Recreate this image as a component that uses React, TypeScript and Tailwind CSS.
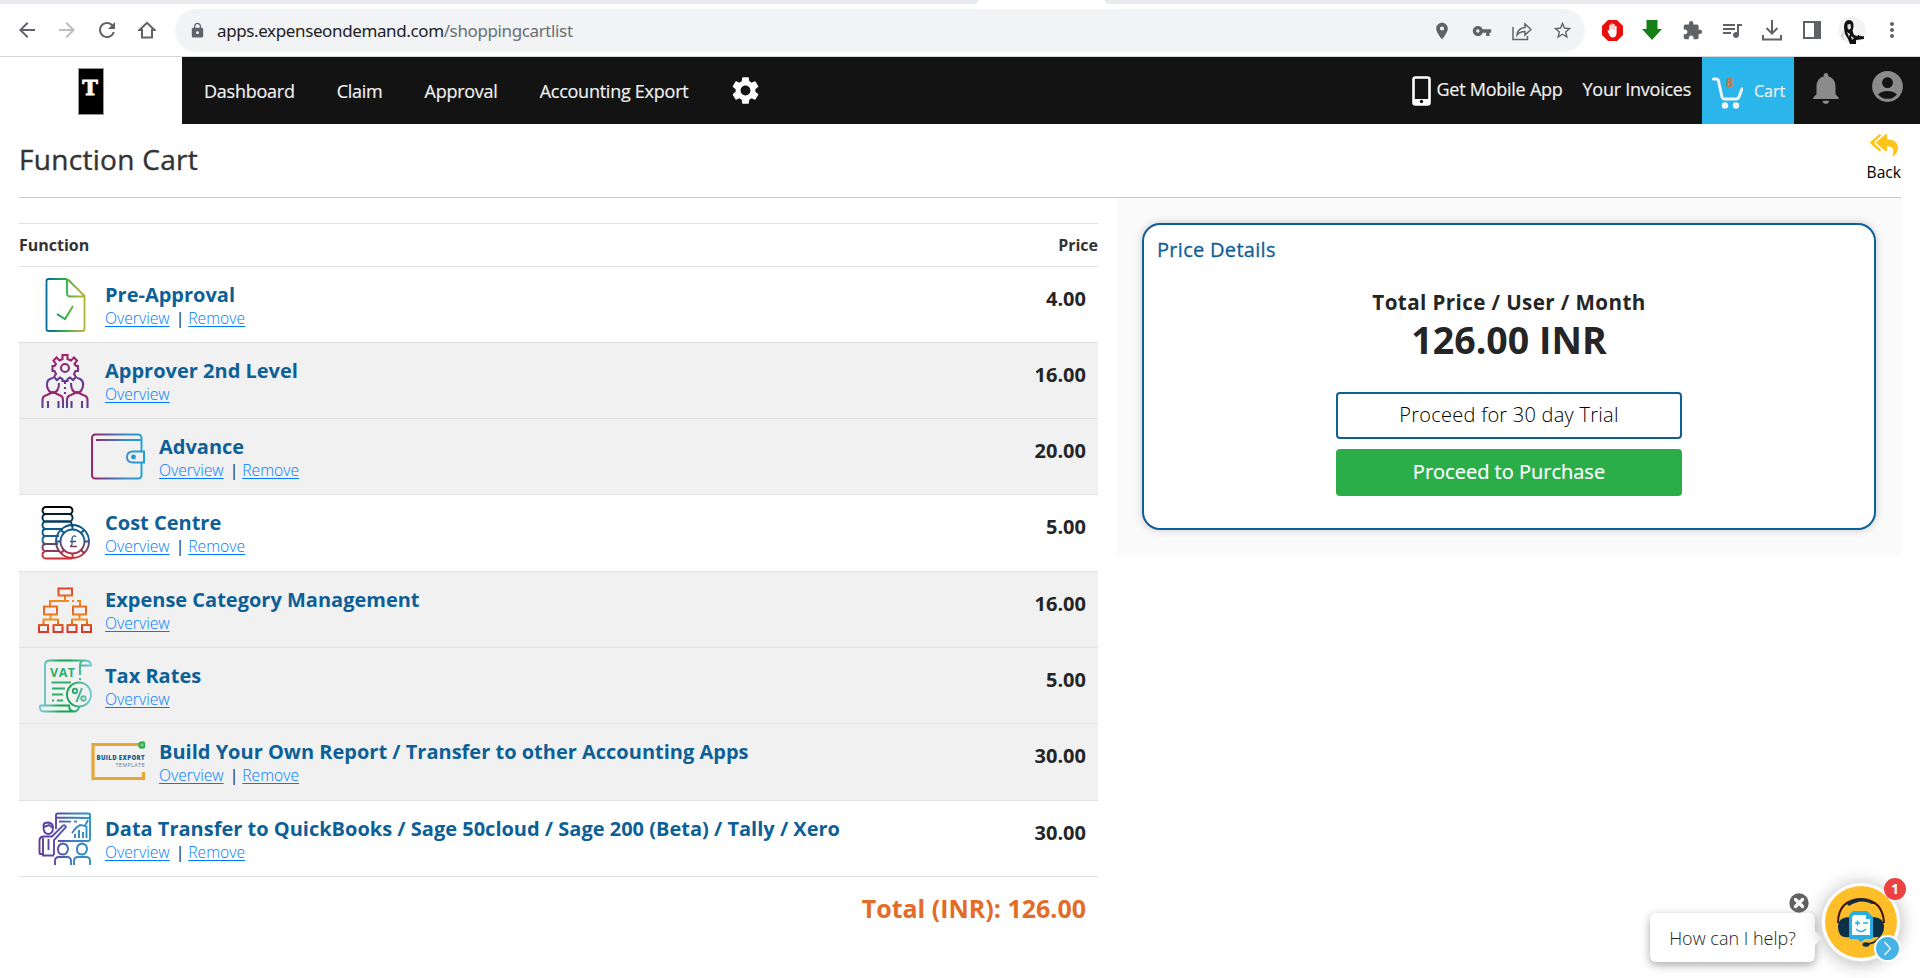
import React from "react";
import { MdLock, MdLocationOn, MdVpnKey, MdStarBorder, MdExtension, MdMoreVert, MdAccountCircle, MdSettings, MdArrowBack, MdArrowForward, MdRefresh, MdOutlineQueueMusic, MdNotifications } from "react-icons/md";
import { FaReplyAll } from "react-icons/fa";

type IconName = "doc" | "approver" | "wallet" | "coins" | "tree" | "vat" | "export" | "board";

type Item = {
  name: string;
  price: string;
  icon: IconName;
  shaded?: boolean;
  child?: boolean;
  removable?: boolean;
};

const items: Item[] = [
  { name: "Pre-Approval", price: "4.00", icon: "doc", removable: true },
  { name: "Approver 2nd Level", price: "16.00", icon: "approver", shaded: true },
  { name: "Advance", price: "20.00", icon: "wallet", shaded: true, child: true, removable: true },
  { name: "Cost Centre", price: "5.00", icon: "coins", removable: true },
  { name: "Expense Category Management", price: "16.00", icon: "tree", shaded: true },
  { name: "Tax Rates", price: "5.00", icon: "vat", shaded: true },
  { name: "Build Your Own Report / Transfer to other Accounting Apps", price: "30.00", icon: "export", shaded: true, child: true, removable: true },
  { name: "Data Transfer to QuickBooks / Sage 50cloud / Sage 200 (Beta) / Tally / Xero", price: "30.00", icon: "board", removable: true },
];

function Gradient({ id, stops, vertical }: { id: string; stops: string[]; vertical?: boolean }) {
  return (
    <linearGradient id={id} gradientUnits="userSpaceOnUse" x1="0" y1="0" x2={vertical ? 0 : 54} y2={vertical ? 54 : 0}>
      {stops.map((c, i) => (
        <stop key={c + i} offset={i / (stops.length - 1)} stopColor={c} />
      ))}
    </linearGradient>
  );
}

function ItemIcon({ name }: { name: IconName }) {
  const common = { width: 54, height: 54, viewBox: "0 0 54 54", fill: "none", strokeWidth: 1.9, className: "block shrink-0" };
  switch (name) {
    case "doc":
      return (
        <svg {...common} stroke="url(#g-doc)">
          <defs><Gradient id="g-doc" stops={["#0a6aa0", "#0a7a9a", "#2fae4a", "#a3b53a", "#b5b83a"]} /></defs>
          <path d="M29 1H10.500Q8.500 1 8.500 3V51Q8.500 53 10.500 53H44.500Q46.500 53 46.500 51V18L30 1.500M29 1V15Q29 18.500 32.500 18.500H46" />
          <path d="M19 36L27 41L35 28" strokeWidth="2" />
        </svg>
      );
    case "approver":
      return (
        <svg {...common} stroke="url(#g-app)" strokeWidth={2.1}>
          <defs><Gradient id="g-app" vertical stops={["#a81e66", "#8a2a78", "#5a3c98", "#a02268", "#4a4a9e"]} /></defs>
          <path d="M24.500 1H29.500V5L33 6.500L36 3.500L39 6.500L36.500 10L38 12H40V17H37.500L36 20L38 23L35 26L32 23.500L29.500 25V27H24.500V25L22 23.500L19 26L16 23L18 20L16.500 17H14.500V12H16.500L18 10L15.500 6.500L18.500 3.500L21.500 6.500L24.500 5Z" />
          <circle cx="27" cy="14" r="4" />
          <path d="M15 24Q8 25 9 32Q10 38 15 39Q21 38 21 29M39 24Q46 25 45 32Q44 38 39 39Q33 38 33 29" />
          <path d="M4.500 55V46Q4.500 42 9 41L15 38L21 41Q25 42 25 46V55M49.500 55V46Q49.500 42 45 41L39 38L33 41Q29 42 29 46V55M10 47V55M20.500 47V55M33.500 47V55M44 47V55" />
          <path d="M27 28V42" stroke="#7a2f86" strokeDasharray="2 3" />
        </svg>
      );
    case "wallet":
      return (
        <svg {...common} stroke="url(#g-wal)">
          <defs><Gradient id="g-wal" stops={["#a3195b", "#5a5a9e", "#3b8fc5", "#1aa3dc"]} /></defs>
          <path d="M50.500 21V8Q50.500 4.500 47 4.500H4.500Q1 4.500 1 8V45Q1 48.500 4.500 48.500H47Q50.500 48.500 50.500 45V32" />
          <path d="M5 10Q30 10.010 50 10" />
          <path d="M53 21.500H42Q36 21.500 36 27T42 32.500H53Z" strokeWidth="2" />
          <circle cx="42.500" cy="27" r="1.500" fill="#4a69a5" />
        </svg>
      );
    case "coins":
      return (
        <svg {...common} stroke="url(#g-coin)">
          <defs><Gradient id="g-coin" vertical stops={["#000000", "#04253c", "#0a5a8c", "#1a5f90", "#8a3a5a", "#e02a2e"]} /></defs>
          <rect x="4.500" y="1" width="30" height="7" rx="3.500" />
          <rect x="4.500" y="8" width="30" height="7.500" rx="3.500" />
          <path d="M34 21Q34 15.500 31 15.500H8Q4.500 15.500 4.500 19T8 23H25M21 30H8Q4.500 30 4.500 26.500T8 23M20 38H8Q4.500 38 4.500 34T8 30M22 45H8Q4.500 45 4.500 41.500T8 38M34 52.500H8Q4.500 52.500 4.500 49T8 45H22" />
          <circle cx="34.500" cy="35.500" r="16.500" />
          <circle cx="34.500" cy="35.500" r="12" />
          <path d="M34.500 19V23.500M34.500 47.500V52M18 35.500H22.500M46.500 35.500H51M23 24L26 27M43 27L46 24M23 47L26 44M43 44L46 47" />
          <path d="M38 31Q37 29.500 35.500 30Q34 30.500 34 33V38Q34 40 32 40.500H39M32 35.500H38" strokeWidth="1.300" />
        </svg>
      );
    case "tree":
      return (
        <svg {...common} stroke="url(#g-tree)" strokeWidth={2}>
          <defs><Gradient id="g-tree" vertical stops={["#d63a2a", "#e24a26", "#ef8f1c", "#ea5a22", "#ef9a1c", "#d63a2a", "#d63a2a"]} /></defs>
          <path d="M20.500 5.500H34V12.500H20.500ZM27 12.500V18H12V23.500M27 18H31M34 18H36M39 18H42V23.500M6 23.500H19V31.500H6ZM35 23.500H48V31.500H35ZM12.500 31.500V36.500M5.500 42V36.500H20V42M41.500 31.500V36.500M34 42V36.500H49V42M1 42H10V49H1ZM15.500 42H24.500V49H15.500ZM29.500 42H38.500V49H29.500ZM44 42H53V49H44Z" />
        </svg>
      );
    case "vat":
      return (
        <svg {...common} stroke="url(#g-vat)">
          <defs><Gradient id="g-vat" stops={["#7cc8e0", "#5abfae", "#12a650", "#12a650", "#4ab99a", "#7cc8e0"]} /></defs>
          <path d="M7 46V6Q7 1.500 12 1.500H47Q53 1.500 53 6.500H42Q42 1.500 47 1.500M42 6V16M42 19V21M2 46.500H31Q31 52.500 37 52.500H6Q1 52.500 2 46.500M37 52.500Q41 51 41 48" />
          <circle cx="41" cy="35.500" r="12" />
          <path d="M44 29L38.500 43" strokeWidth="2" />
          <circle cx="37" cy="32" r="2.200" />
          <circle cx="45.500" cy="39.500" r="2.200" />
          <path d="M13.500 23.500H33M14 29.500H27M14 35.500H25M14 41.500H16M19 41.500H25" stroke="#2fae6c" strokeWidth="2" />
          <text x="12" y="17.500" fontSize="12.500" fontWeight="700" textLength="25" stroke="none" fill="#2fae6c">VAT</text>
        </svg>
      );
    case "export":
      return (
        <svg {...common}>
          <path d="M48 9.500H2V43.500H52.500V37" stroke="#e8a735" strokeWidth="3.200" />
          <circle cx="51" cy="10" r="3.800" fill="#2aae4a" />
          <path d="M49 10H53M51 8V12" stroke="#8fd8a0" strokeWidth="1" />
          <text x="5.500" y="25" fontSize="6" fontWeight="800" textLength="48" fill="#0d5c8f">BUILD EXPORT</text>
          <text x="24.500" y="31.500" fontSize="5.600" textLength="29" fill="#5a7fa5">TEMPLATE</text>
        </svg>
      );
    case "board":
      return (
        <svg {...common} stroke="url(#g-board)">
          <defs><Gradient id="g-board" stops={["#5a3c98", "#5b4aa8", "#3b7fc0", "#2a95c5"]} /></defs>
          <path d="M18 17V3Q18 1.500 20 1.500H50Q52 1.500 52 3V27Q52 29 50 29H20M18 5.500L52 6M21 9.500L33 9.600M36 9.500L39 9.600" />
          <path d="M34 21L38 16L42 13L47 14L50 8M37 26V22M41 26V18M45 26V20M48.500 26V14" />
          <path d="M5.500 13Q6 10.500 10 10.500Q15 11 15 15.500Q15 22 10 22Q5 22 5.500 13ZM6 15L11 13L15 16" />
          <path d="M16 43.500H5V26M5 42H2Q1.500 42 1.500 39V28Q2 24.500 6 24.500H14L25 13.500Q27 12.500 28 15L16 28V43M10.500 27V38" />
          <path d="M25 31.500Q30 32 30 37.500Q29 42.500 25 42.500Q20 42.500 20 37.500Q20 32 25 31.500ZM44 31.500Q49 32 49 37.500Q48 42.500 44 42.500Q39 42.500 39 37.500Q39 32 44 31.500ZM17 53V49Q17 45 21 45H29Q33 45 33 49V53M36 53V49Q36 45 40 45H48Q52 45 52 49V53" />
        </svg>
      );
  }
}

function BrowserBar() {
  return (
    <div className="h-[57px] shrink-0 border-b border-[#d5d8d8] bg-white text-[#5f6368]">
      <div className="flex h-1 justify-between">
        <div className="w-[978px] rounded-br-lg bg-[#e8eaed]" />
        <div className="w-[815px] rounded-bl-lg bg-[#e8eaed]" />
      </div>
      <div className="flex h-[52px] items-center">
        <div className="grid w-[175px] grid-cols-[repeat(4,40px)] place-items-center pl-[7px]">
          <MdArrowBack size={24} />
          <MdArrowForward size={24} className="text-[#bcbec0]" />
          <MdRefresh size={24} />
          <svg width="18" height="18" viewBox="0 0 18 18" fill="none" stroke="currentColor" strokeWidth="2"><path d="M1.500 9L9 1.800L16.500 9H14V16.500H4V9Z" /></svg>
        </div>
        <div className="mt-px flex h-[43px] w-[1410px] items-center rounded-full bg-[#f1f3f4] pl-[14px] pr-[3px]">
          <MdLock size={17} />
          <div className="ml-[11px] font-['Noto_Sans',sans-serif] text-[17px] tracking-[-0.38px] text-[#202124]">
            apps.expenseondemand.com<span className="text-[#6b6f73]">/shoppingcartlist</span>
          </div>
          <div className="ml-auto grid grid-cols-[repeat(4,40px)] place-items-center">
            <MdLocationOn size={20} />
            <MdVpnKey size={20} />
            <svg width="20" height="20" viewBox="0 0 20 20" fill="none" stroke="currentColor" strokeWidth="1.500"><path d="M1 6V18.500H15.500V15M5 14Q6 7 13 6.500V3L19 8.500L13 14V10.500Q8 10.500 5 14Z" /></svg>
            <MdStarBorder size={21} />
          </div>
        </div>
        <div className="grid flex-1 grid-cols-[repeat(8,40px)] place-items-center pl-[7px]">
          <svg width="21" height="21" viewBox="0 0 21 21"><path d="M6 0H15L21 6V15L15 21H6L0 15V6Z" fill="#ea0f0f" /><path d="M5.500 10.500Q6.500 9.500 7.300 11V5Q8.100 4 8.900 5V9.500H9.200V3.700Q10 2.700 10.800 3.700V9.500H11.100V4.500Q11.900 3.600 12.700 4.500V10H13V6.200Q13.900 5.500 14.600 6.300V13Q14.300 17.500 10.500 17.500Q7.500 17.300 5.500 10.500Z" fill="#fff" /></svg>
          <svg width="20" height="20" viewBox="0 0 20 20" fill="#158015"><path d="M4.500 0H15.500V9H20L10 20L0 9H4.500Z" /></svg>
          <MdExtension size={21} />
          <MdOutlineQueueMusic size={24} />
          <svg width="20" height="21" viewBox="0 0 20 21" fill="none" stroke="currentColor" strokeWidth="2"><path d="M10 0V13M4.500 8L10 13.500L15.500 8M1 15V19.500H19V15" /></svg>
          <svg width="18" height="18" viewBox="0 0 18 18"><path d="M1 1H17V17H1Z" fill="none" stroke="currentColor" strokeWidth="2" /><path d="M11 1H17V17H11Z" fill="currentColor" /></svg>
          <svg width="28" height="28" viewBox="0 0 28 28"><circle cx="14" cy="14" r="13.500" fill="#f3f3f3" /><path d="M6 12Q6 4 11 4Q16 4 15.500 11L14.500 15L16 19L19 20V21L20 19H21L22 20.500L23 19.500L24 20.500L26 20V23L18 24V28H12L10 23L7 18Z" fill="#111" /><path d="M9.500 8.500L12.500 8L13 12L11 14L9.500 12ZM9 16L12 18L11 21ZM13 20L16 22L14 24Z" fill="#ddd" /><path d="M3 20L6 15L5 21L8 25Z" fill="#c9c9c9" /></svg>
          <MdMoreVert size={24} />
        </div>
      </div>
    </div>
  );
}

function NavBar() {
  return (
    <header className="flex h-[67px] shrink-0">
      <div className="flex w-[182px] justify-center pt-[11px]">
        <div className="flex h-[47px] w-[26px] justify-center border border-[#999] bg-black pt-[6px] pr-[2px] text-white">
          <span className="font-['DejaVu_Serif',serif] text-[21px] font-bold leading-[26px] [-webkit-text-stroke:0.8px_#fff]">T</span>
        </div>
      </div>
      <nav className="flex flex-1 items-center bg-[#131313] pl-[22px] text-[18px] font-medium tracking-[-0.25px] text-[#f0f0f0] [-webkit-text-stroke:0.2px]">
        <span className="pt-[2px]">Dashboard</span>
        <span className="ml-[42px] pt-[2px]">Claim</span>
        <span className="ml-[42px] pt-[2px]">Approval</span>
        <span className="ml-[42px] pt-[2px]">Accounting Export</span>
        <MdSettings size={33} className="ml-[41px] text-white" />
        <div className="ml-auto flex h-full items-center">
          <svg width="19" height="30" viewBox="0 0 19 30" className="mr-[5px]"><rect x="1.500" y="1.500" width="16" height="27" rx="2" fill="none" stroke="#fff" strokeWidth="2.600" /><path d="M2 23H17V28H2Z" fill="#fff" /><circle cx="9.500" cy="25.500" r="1.700" fill="#131313" stroke="none" /></svg>
          <span className="pb-[2px]">Get Mobile App</span>
          <span className="ml-[20px] pb-[2px]">Your Invoices</span>
          <div className="relative ml-[11px] flex h-full w-[92px] items-center bg-[#2ab6ea] pl-[10px]">
            <svg width="31" height="32" viewBox="0 0 31 32" className="mt-[4px]"><path d="M1.500 2H4Q6 2 6.500 4L10 20Q10.500 22 13 22H24Q26 22 27 20L30 12" fill="none" stroke="#f2f2f2" strokeWidth="3" strokeLinecap="round" /><circle cx="13" cy="28.500" r="3.200" fill="#f2f2f2" /><circle cx="24" cy="28.500" r="3.200" fill="#f2f2f2" /></svg>
            <b className="absolute left-[24px] top-[5px] text-[13px] leading-[40px] text-[#df7029]">8</b>
            <span className="ml-[11px] pt-px text-base tracking-normal">Cart</span>
          </div>
          <MdNotifications size={38} className="mb-[6px] ml-[13px] text-[#8b8b8b]" />
          <MdAccountCircle size={37} className="mb-[9px] ml-[24px] mr-[14px] text-[#8b8b8b]" />
        </div>
      </nav>
    </header>
  );
}

function CartRow({ item }: { item: Item }) {
  return (
    <div className={`flex h-[76.3px] border-b border-[#dee2e6] pr-3 ${item.shaded ? "bg-[#f1f1f1]" : ""} ${item.child ? "pl-[72px]" : "pl-[19px]"}`}>
      <div className="pt-[11px]"><ItemIcon name={item.icon} /></div>
      <div className={`flex-1 pt-[13px] ${item.child ? "ml-[14px]" : "ml-[13px]"}`}>
        <div className="text-[20px] font-bold leading-[30px] text-[#0d5f97]">{item.name}</div>
        <div className="mt-[-1px] text-[15.7px] font-light leading-[19px] text-[#222]">
          <a className="text-[#007bff] underline underline-offset-2">Overview</a>
          {item.removable && <><span className="ml-[6px] mr-[4px] font-normal">|</span><a className="text-[#007bff] underline underline-offset-2">Remove</a></>}
        </div>
      </div>
      <div className="pt-[17px] text-[20px] font-bold leading-[30px] text-[#252525]">{item.price}</div>
    </div>
  );
}

function ChatWidget() {
  return (
    <div className="absolute bottom-0 right-0 h-[118px] w-[300px]">
      <div className="absolute left-[30px] top-[53px] flex h-[49px] w-[165px] items-center justify-center rounded-md bg-white pt-px text-[18px] font-light text-[#222] shadow-[0_3px_10px_rgba(0,0,0,0.35)]">How can I help?</div>
      <svg className="absolute left-[194px] top-[70px]" width="8" height="16" viewBox="0 0 8 16"><path d="M0 0L8 8L0 16Z" fill="#fff" /></svg>
      <svg className="absolute left-[169px] top-[33px]" width="20" height="20" viewBox="0 0 20 20"><circle cx="10" cy="10" r="9.700" fill="#616161" /><path d="M6.500 6.500L13.500 13.500M13.500 6.500L6.500 13.500" stroke="#fff" strokeWidth="3.200" strokeLinecap="round" /></svg>
      <div className="absolute left-[201px] top-[22px] flex size-[80px] items-center justify-center rounded-full border border-[#e5e5e5] bg-white shadow-[0_2px_18px_rgba(0,0,0,0.28)]">
        <svg width="72" height="72" viewBox="0 0 72 72">
          <circle cx="36" cy="36" r="36" fill="#fdbe2a" />
          <path d="M13 37Q13 14 36 13Q58 14 59 37" fill="none" stroke="#42100f" strokeWidth="2" />
          <path d="M22 18Q36 7 50 18L47 18Q36 12 24 20Z" fill="#0b3048" />
          <path d="M25 31V51Q13 53 13 41Q13 31 25 31ZM47 31V51Q59 53 59 41Q59 31 47 31Z" fill="#0b3048" />
          <path d="M28 25H42L48 31V51Q48 53 46 53H40L36 56L32 53H26Q24 53 24 51V29Z" fill="#29aee3" />
          <path d="M29 29H41V33H45V49H27V31Z" fill="#fff" />
          <path d="M30 37H35M32.500 34.500V39.500M38 37H43M31 43Q36 48 41 43" fill="none" stroke="#29aee3" strokeWidth="1.600" />
          <path d="M56 47Q54 57 42 58" fill="none" stroke="#0b3048" strokeWidth="1.500" />
          <ellipse cx="41" cy="58.500" rx="3.500" ry="2.200" fill="#0b3048" />
        </svg>
      </div>
      <div className="absolute left-[264px] top-[18px] flex size-[22px] items-center justify-center rounded-full bg-[#ea4141] pb-px text-[14px] font-bold text-white">1</div>
      <svg className="absolute left-[254px] top-[75px]" width="27" height="27" viewBox="0 0 27 27"><circle cx="13.500" cy="13.500" r="12.500" fill="#46b3e6" stroke="#fff" strokeWidth="2" /><path d="M10.500 7L16.500 13.500L10.500 20" fill="none" stroke="#fff" strokeWidth="1.200" /></svg>
    </div>
  );
}

export default function App() {
  return (
    <div className="relative flex h-[978px] w-[1920px] flex-col overflow-hidden bg-white font-['Open_Sans',sans-serif] text-[#252525]">
      <BrowserBar />
      <NavBar />
      <main className="flex-1 px-[19px]">
        <div className="flex h-[74px] items-start justify-between border-b border-[#c8c8c8]">
          <h1 className="pt-[14px] text-[28px] font-medium leading-[42px] tracking-[0.3px] text-[#333] [-webkit-text-stroke:0.4px]">Function Cart</h1>
          <div className="flex flex-col items-center pt-[7px] text-[15.6px]">
            <FaReplyAll size={28} className="text-[#fdc41a]" />
            <span className="mt-[2px] leading-[22px] text-black">Back</span>
          </div>
        </div>
        <div className="flex items-start">
          <section className="mt-[25px] w-[1079px]">
            <div className="flex h-[43.5px] items-center justify-between border-y border-[#dee2e6] text-base font-bold text-[#333]">
              <span>Function</span><span>Price</span>
            </div>
            {items.map((item) => <CartRow key={item.name} item={item} />)}
            <div className="pr-3 pt-[12px] text-right text-[25px] font-bold leading-[38px] text-[#e36c28]">Total (INR): 126.00</div>
          </section>
          <aside className="ml-[19px] h-[357px] w-[784px] bg-[#fafafa] p-[25px]">
            <div className="flex h-[307px] flex-col items-center rounded-[18px] border-2 border-[#0d5f97] bg-white px-[13px] shadow-[0_0_8px_rgba(0,0,0,0.2)]">
              <div className="mt-[10px] self-start text-[20px] font-medium leading-[30px] tracking-[0.3px] text-[#0d5f97] [-webkit-text-stroke:0.3px]">Price Details</div>
              <div className="mt-[22px] text-[20.6px] font-bold leading-[30px] tracking-[0.4px]">Total Price / User / Month</div>
              <div className="mt-0 text-[37.5px] font-bold leading-[46px]">126.00 INR</div>
              <button className="mt-[29px] h-[47px] w-[346px] rounded border-2 border-[#0d5f97] pb-px text-[20px] font-light tracking-[0.25px] text-black">Proceed for 30 day Trial</button>
              <button className="mt-[10px] h-[47px] w-[346px] rounded bg-[#2bae4a] pb-[2px] text-[20px] font-medium text-white [-webkit-text-stroke:0.2px]">Proceed to Purchase</button>
            </div>
          </aside>
        </div>
      </main>
      <ChatWidget />
    </div>
  );
}
